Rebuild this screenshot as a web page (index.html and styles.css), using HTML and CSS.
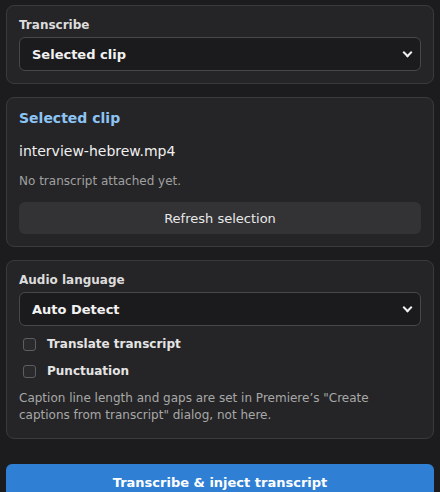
FILE: index.html
```html
<!DOCTYPE html>
<html lang="en">
<head>
  <meta charset="UTF-8">
  <meta name="viewport" content="width=device-width, initial-scale=1.0">
  <title>Transcribe Panel</title>
  <link rel="stylesheet" href="styles.css">
</head>
<body>
  <div class="panel">
    <section class="card">
      <label class="fieldLabel" for="source">Transcribe</label>
      <div class="selectWrap">
        <select id="source" class="select">
          <option>Selected clip</option>
          <option>Sequence</option>
        </select>
      </div>
    </section>

    <section class="card">
      <h2 class="cardTitle">Selected clip</h2>
      <div class="clipName">interview-hebrew.mp4</div>
      <div class="muted">No transcript attached yet.</div>
      <button class="button secondary">Refresh selection</button>
    </section>

    <section class="card">
      <label class="fieldLabel" for="lang">Audio language</label>
      <div class="selectWrap">
        <select id="lang" class="select">
          <option>Auto Detect</option>
          <option>Hebrew</option>
          <option>English</option>
        </select>
      </div>
      <label class="check first"><input type="checkbox"> <span>Translate transcript</span></label>
      <label class="check"><input type="checkbox"> <span>Punctuation</span></label>
      <p class="note">Caption line length and gaps are set in Premiere’s "Create captions from transcript" dialog, not here.</p>
    </section>

    <button class="button primary">Transcribe &amp; inject transcript</button>
  </div>
</body>
</html>
```

FILE: styles.css
```css
* {
  box-sizing: border-box;
}

body {
  font-family: 'DejaVu Sans', sans-serif;
  background-color: #1c1c1e;
  color: #ececec;
  margin: 0;
  padding: 5px 6px;
}

.panel {
  display: flex;
  flex-direction: column;
  gap: 13px;
}

.card {
  background-color: #252527;
  border: 1px solid #3a3a3d;
  border-radius: 8px;
  padding: 10px 12px 12px 12px;
  display: flex;
  flex-direction: column;
}

.fieldLabel {
  font-size: 12px;
  font-weight: bold;
  color: #dcdcdc;
  margin-bottom: 3px;
  line-height: 18px;
}

/* select with a custom chevron */
.selectWrap {
  position: relative;
}

.selectWrap::after {
  content: '';
  position: absolute;
  right: 10px;
  top: 12px;
  width: 5px;
  height: 5px;
  border-right: 2px solid #f0f0f0;
  border-bottom: 2px solid #f0f0f0;
  transform: rotate(45deg);
  pointer-events: none;
}

.select {
  appearance: none;
  width: 100%;
  height: 34px;
  padding: 0 12px;
  background-color: #1b1b1d;
  color: #f2f2f2;
  border: 1px solid #48484b;
  border-radius: 6px;
  font-family: inherit;
  font-size: 13px;
  font-weight: bold;
}

.cardTitle {
  margin: 0;
  font-size: 14px;
  font-weight: bold;
  color: #8cc4f4;
  line-height: 20px;
}

.clipName {
  font-size: 14px;
  margin-top: 13px;
  line-height: 20px;
  color: #f0f0f0;
}

.muted {
  font-size: 12px;
  color: #a0a0a0;
  margin-top: 11px;
  line-height: 18px;
}

.button {
  border: none;
  border-radius: 6px;
  font-family: inherit;
  font-size: 13px;
  cursor: pointer;
  width: 100%;
}

.secondary {
  margin-top: 12px;
  height: 32px;
  background-color: #333336;
  color: #e8e8e8;
}

.primary {
  margin-top: 12px;
  height: 36px;
  background-color: #2f7fd4;
  color: white;
  font-weight: bold;
}

.check {
  display: flex;
  align-items: center;
  gap: 11px;
  font-size: 12px;
  font-weight: bold;
  color: #e4e4e4;
  margin-left: 4px;
  margin-top: 7px;
  height: 20px;
}

.check.first {
  margin-top: 8px;
}

.check input {
  appearance: none;
  margin: 0;
  width: 13px;
  height: 13px;
  border: 1px solid #5e5e62;
  border-radius: 3px;
  background-color: #2a2a2d;
}

.note {
  margin: 9px 0 2px;
  font-size: 12px;
  line-height: 17px;
  color: #a8a8a8;
}
```
